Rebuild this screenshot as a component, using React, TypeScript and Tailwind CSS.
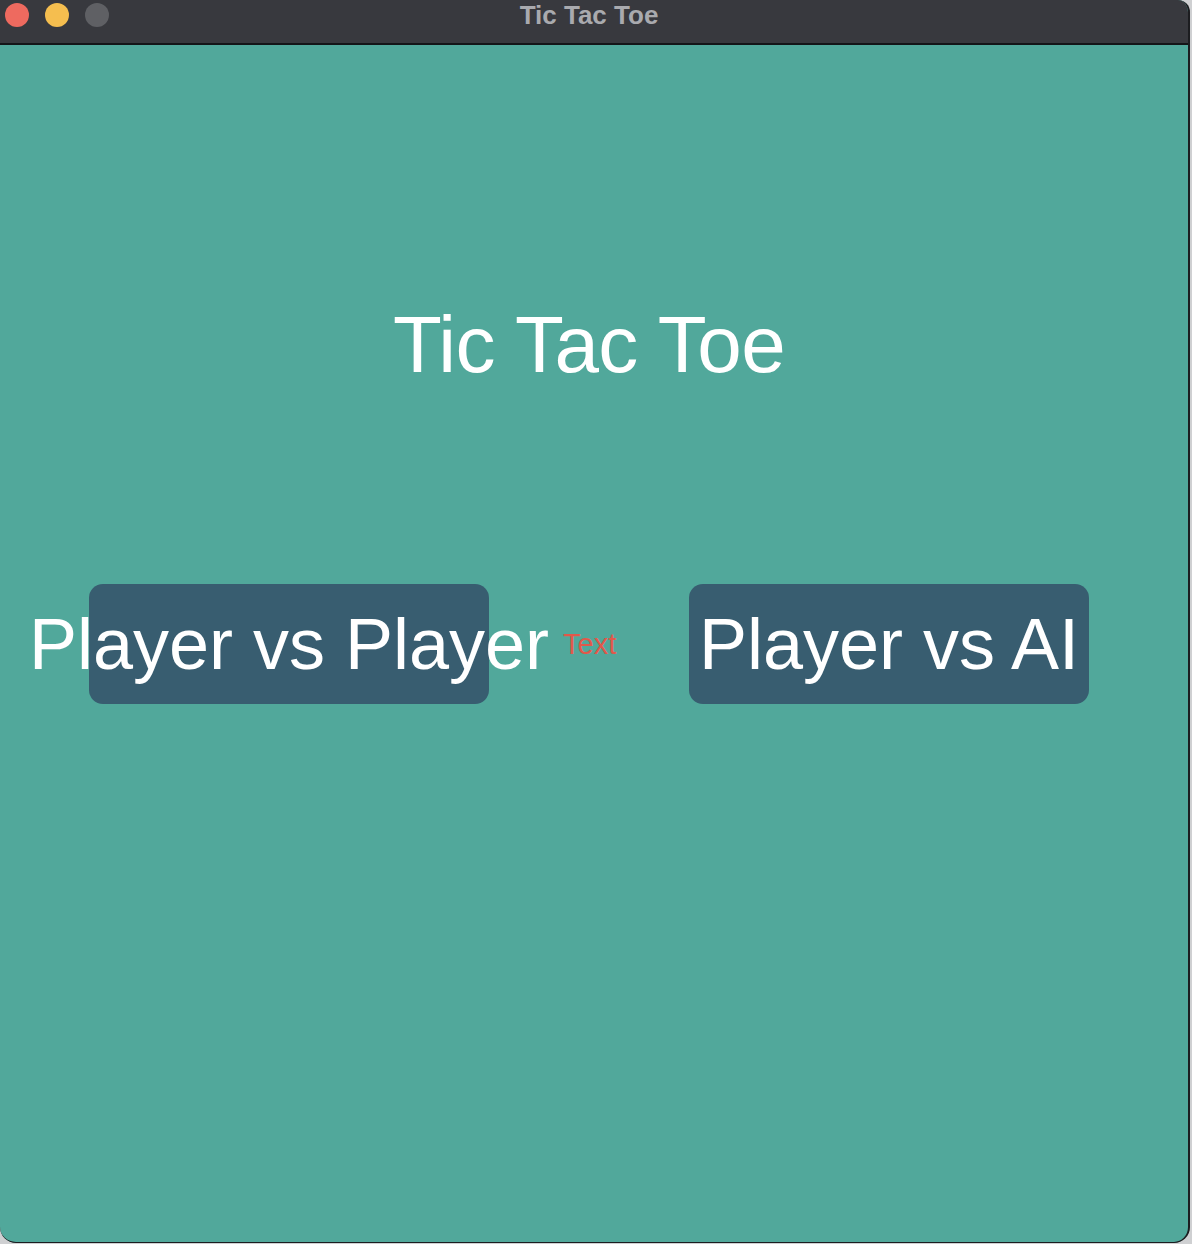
export default function App() {
  return (
    <div className="w-[1192px] h-[1244px] bg-[#cfd0d2] font-['Liberation_Sans',Arial,sans-serif]">
      <div className="w-[1190px] h-[1243px] flex flex-col bg-[#51a89b] border-r-2 border-b border-[#1c1d20] rounded-tr-[12px] rounded-br-[16px] rounded-bl-[16px] overflow-hidden">
        {/* Title bar */}
        <div className="relative h-[45px] shrink-0 bg-[#38393e] border-b-2 border-[#141518] flex items-start">
          <div className="flex gap-4 pl-[5px] pt-[3px]">
            <span className="w-6 h-6 rounded-full bg-[#ee6a5f]" />
            <span className="w-6 h-6 rounded-full bg-[#f5be4f]" />
            <span className="w-6 h-6 rounded-full bg-[#5f6064]" />
          </div>
          <div className="absolute inset-x-0 top-0 text-center pr-[10px] text-[26px] leading-[30px] font-bold text-[#a9aaae]">
            Tic Tac Toe
          </div>
        </div>

        {/* Content */}
        <div className="flex flex-col items-center pt-[260px]">
          <h1 className="text-[80px] leading-none tracking-[-0.6px] text-white pr-[10px]">Tic Tac Toe</h1>
        </div>

        <div className="flex items-center pl-[89px] mt-[199px]">
          <button className="w-[400px] h-[120px] rounded-[14px] bg-[#385d70] flex items-center justify-center whitespace-nowrap text-[72px] leading-none text-white">
            Player vs Player
          </button>
          <div className="w-[200px] pl-[74px] pt-[1px] text-[29px] leading-none text-[#e1584a]">Text</div>
          <button className="w-[400px] h-[120px] rounded-[14px] bg-[#385d70] flex items-center justify-center whitespace-nowrap text-[72px] leading-none text-white">
            Player vs AI
          </button>
        </div>
      </div>
    </div>
  );
}
